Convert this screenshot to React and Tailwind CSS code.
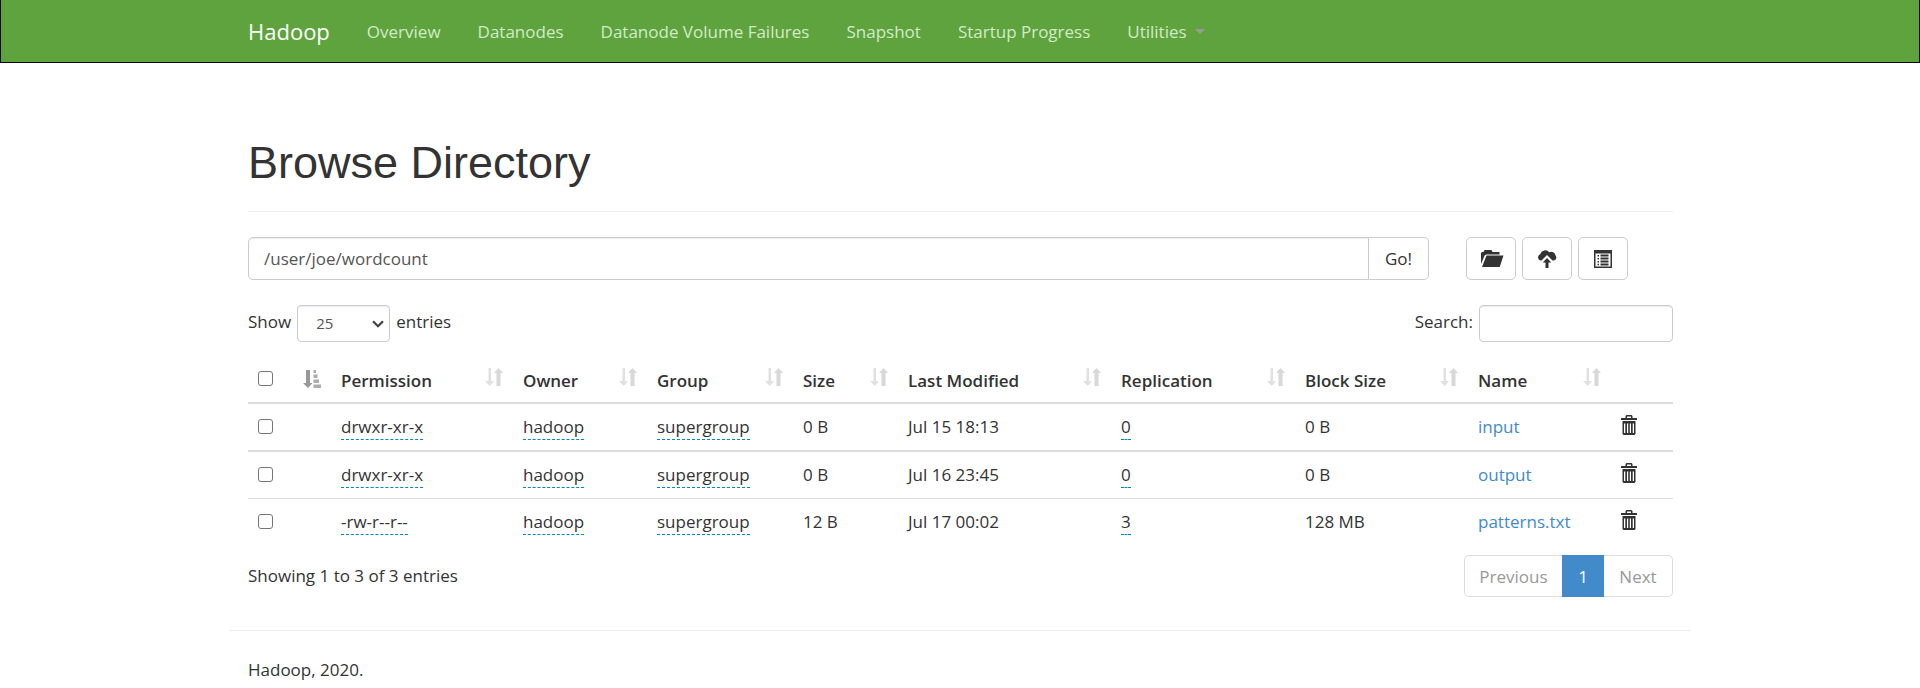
import { useState } from 'react'

const navLinks = ['Overview', 'Datanodes', 'Datanode Volume Failures', 'Snapshot', 'Startup Progress']

const columns = [
  { label: 'Permission', width: 'w-[182px]' },
  { label: 'Owner', width: 'w-[134px]' },
  { label: 'Group', width: 'w-[146px]' },
  { label: 'Size', width: 'w-[105px]' },
  { label: 'Last Modified', width: 'w-[213px]' },
  { label: 'Replication', width: 'w-[184px]' },
  { label: 'Block Size', width: 'w-[173px]' },
  { label: 'Name', width: 'w-[143px]' },
]

const files = [
  { permission: 'drwxr-xr-x', owner: 'hadoop', group: 'supergroup', size: '0 B', modified: 'Jul 15 18:13', replication: 0, blockSize: '0 B', name: 'input' },
  { permission: 'drwxr-xr-x', owner: 'hadoop', group: 'supergroup', size: '0 B', modified: 'Jul 16 23:45', replication: 0, blockSize: '0 B', name: 'output' },
  { permission: '-rw-r--r--', owner: 'hadoop', group: 'supergroup', size: '12 B', modified: 'Jul 17 00:02', replication: 3, blockSize: '128 MB', name: 'patterns.txt' },
]

function SortIcon() {
  return (
    <svg width="18" height="18" viewBox="0 0 18 18" fill="#d8d8d8" className="shrink-0">
      <path d="M3.5 0h2.5v13h3L4.75 18 0 13h3.5z" opacity="0.8" />
      <path d="M13.5 0 18 5h-2.5v13h-4V5H9z" />
    </svg>
  )
}

function SortAscIcon() {
  return (
    <svg width="18" height="18" viewBox="0 0 18 18" fill="#999" className="shrink-0">
      <path d="M3 0h4v13H9.500L5 18 0 13h3z" />
      <path d="M10.500 0h2.500v3h-2.500zM10.500 4.500h4v3.500h-4zM10.500 9.500h5.500v3.500h-5.500zM10.500 14.500h7.500v3.500h-7.500z" opacity="0.8" />
    </svg>
  )
}

function FolderIcon() {
  return (
    <svg width="23" height="18" viewBox="0 0 23 18" fill="#333" className="ml-[3px]">
      <path d="M0 14V3l1-1h1.500l1-2h7l1 2h7v2.500H5.200L3.600 5.500z" />
      <path d="M5.500 5.500H22.500L18.700 17H1z" />
    </svg>
  )
}

function UploadIcon() {
  return (
    <svg width="20" height="19" viewBox="0 0 20 19" fill="#333">
      <path d="M3.500 11.500A3.300 3.300 0 0 1 3.200 5.200 5.200 5.200 0 0 1 12.300 3.300 4.200 4.200 0 0 1 18.500 6.500 3 3 0 0 1 17 11.500H15.500L10 6 4.500 11.500z" />
      <path d="M10 9l4.300 4.500h-2.800V19h-3v-5.500H5.700z" />
    </svg>
  )
}

function ListIcon() {
  return (
    <svg width="18" height="18" viewBox="0 0 18 18" fill="#333">
      <path fillRule="evenodd" d="M0 0h18v18H0zM1.500 3.500v13h15V3.500z" />
      <path d="M3.500 5h1.500v1.500H3.500zM3.500 8h1.500v1.500H3.500zM3.500 11h1.500v1.500H3.500zM3.500 13.700h1.500v1.500H3.500zM6.500 4.500H14.500v2H6.500zM6.500 7.500H14.500v2H6.500zM6.500 10.500H14.500v2H6.500zM6.500 13.500H14.500v2H6.500z" />
    </svg>
  )
}

function TrashIcon() {
  return (
    <svg width="16" height="20" viewBox="0 0 16 20" fill="#333">
      <path fillRule="evenodd" d="M4.500 3V1l1-1h5l1 1v2H16v2H0V3zM6 3h4V1.500H6z" />
      <path fillRule="evenodd" d="M1.500 6h13V19l-1 1h-11l-1-1zM3 8.500V18h1.300V8.500zM6 8.500V18h1.200V8.500zM8.800 8.500V18H10V8.500zM11.700 8.500V18H13V8.500z" />
    </svg>
  )
}

function Editable({ children }) {
  return <span className="inline-block border-b border-dashed border-[#0088cc] leading-[24px]">{children}</span>
}

const check = 'block w-[15px] h-[15px] appearance-none rounded-[3px] border border-[#767676] bg-white checked:bg-[#428bca]'
const toolButton = 'flex h-[43px] w-[50px] items-center justify-center rounded-[5px] border border-[#ccc] bg-white'

export default function App() {
  const [path, setPath] = useState('/user/joe/wordcount')
  const [search, setSearch] = useState('')
  const [selected, setSelected] = useState([])

  function toggle(name) {
    setSelected(selected.includes(name) ? selected.filter(n => n !== name) : [...selected, name])
  }

  // header box picks every file, or clears them
  function toggleAll() {
    setSelected(selected.length === files.length ? [] : files.map(f => f.name))
  }

  const rows = files.filter(f => f.name.includes(search))

  return (
    <div className="font-['Open_Sans',sans-serif] text-[17px] leading-[25px] text-[#333]">
      <header className="border-x border-b border-[#080808] bg-[#5fa33e]">
        <nav className="mx-auto flex h-[62px] max-w-[1462px] items-center gap-[37px] px-[19px] text-[#d2ebc6]">
          <a href="#" className="text-[22px] text-white">Hadoop</a>
          {navLinks.map(link => (
            <a key={link} href="#">{link}</a>
          ))}
          <a href="#" className="flex items-center gap-2">
            Utilities
            <svg width="10" height="5" viewBox="0 0 10 5" fill="#999"><path d="M0 0h10L5 5z" /></svg>
          </a>
        </nav>
      </header>

      <main className="mx-auto max-w-[1462px] pt-[75px] pr-[18px] pl-[19px]">
        <h1 className="border-b border-[#eee] pb-[23px] font-['Liberation_Sans',Arial,sans-serif] text-[45px] leading-[50px] font-normal">
          Browse Directory
        </h1>

        <div className="mt-[25px] flex gap-[37px]">
          <form className="flex h-[43px] flex-1" onSubmit={e => e.preventDefault()}>
            <input
              aria-label="Directory"
              className="min-w-0 flex-1 rounded-l-[5px] border border-[#ccc] px-[15px] text-[#555] shadow-[inset_0_1px_1px_rgba(0,0,0,0.075)]"
              value={path}
              onChange={e => setPath(e.target.value)}
            />
            <button className="w-[60px] rounded-r-[5px] border border-l-0 border-[#ccc] bg-white">Go!</button>
          </form>
          <div className="flex w-[207px] gap-[6px]">
            <button aria-label="Create directory" className={toolButton}><FolderIcon /></button>
            <button aria-label="Upload files" className={toolButton}><UploadIcon /></button>
            <button aria-label="Cut and paste" className={toolButton}><ListIcon /></button>
          </div>
        </div>

        <div className="mt-[25px] flex justify-between leading-[33px]">
          <label className="flex gap-[6px]">
            Show
            <span className="relative">
              <select defaultValue="25" className="h-[37px] w-[93px] appearance-none rounded-[4px] border border-[#ccc] bg-white pl-[18px] text-[15px] text-[#555] shadow-[inset_0_1px_1px_rgba(0,0,0,0.075)]">
                <option>25</option>
                <option>50</option>
                <option>100</option>
              </select>
              <svg width="12" height="8" viewBox="0 0 12 8" fill="none" stroke="#444" strokeWidth="2.300" className="pointer-events-none absolute top-[15px] right-[6px]">
                <path d="M1 1.200l5 5 5-5" />
              </svg>
            </span>
            entries
          </label>
          <label className="flex gap-[6px]">
            Search:
            <input
              className="h-[37px] w-[194px] rounded-[4px] border border-[#ccc] px-3 text-[15px] shadow-[inset_0_1px_1px_rgba(0,0,0,0.075)]"
              value={search}
              onChange={e => setSearch(e.target.value)}
            />
          </label>
        </div>

        <table className="mt-[15px] w-full table-fixed border-separate border-spacing-0 text-left">
          <thead>
            <tr className="h-[45px]">
              <th className="w-[43px] pb-[2px] pl-[10px]">
                <input type="checkbox" aria-label="Select all" className={check} checked={selected.length === files.length} onChange={toggleAll} />
              </th>
              <th className="w-[40px] pr-[10px] pb-[2px]">
                <div className="flex justify-end"><SortAscIcon /></div>
              </th>
              {columns.map(col => (
                <th key={col.label} className={`${col.width} px-[10px] pt-[11px] pb-[9px] font-semibold`}>
                  <div className="flex justify-between whitespace-nowrap">{col.label}<SortIcon /></div>
                </th>
              ))}
              <th></th>
            </tr>
          </thead>
          <tbody className="[&>tr:nth-child(-n+2)>td]:border-t-2">
            {rows.map(f => (
              <tr key={f.name} className="leading-[26px] [&>td]:border-t [&>td]:border-[#ddd] [&>td]:p-[10px]">
                <td className="align-top">
                  <input type="checkbox" aria-label={f.name} className={`${check} mt-[5px]`} checked={selected.includes(f.name)} onChange={() => toggle(f.name)} />
                </td>
                <td></td>
                <td><Editable>{f.permission}</Editable></td>
                <td><Editable>{f.owner}</Editable></td>
                <td><Editable>{f.group}</Editable></td>
                <td>{f.size}</td>
                <td>{f.modified}</td>
                <td><Editable>{f.replication}</Editable></td>
                <td>{f.blockSize}</td>
                <td><a href="#" className="text-[#428bca]">{f.name}</a></td>
                <td className="align-top"><button aria-label={`Delete ${f.name}`} className="mt-[1px] block"><TrashIcon /></button></td>
              </tr>
            ))}
          </tbody>
        </table>

        <div className="mt-[10px] flex justify-between">
          <p className="pt-2">Showing 1 to 3 of 3 entries</p>
          <div className="flex h-[42px] text-[#999]">
            <button className="w-[98px] rounded-l-[5px] border border-r-0 border-[#ddd]">Previous</button>
            <button className="w-[42px] bg-[#428bca] text-white">1</button>
            <button className="w-[69px] rounded-r-[5px] border border-l-0 border-[#ddd]">Next</button>
          </div>
        </div>
      </main>

      <footer className="mx-auto mt-[33px] max-w-[1462px] border-t border-[#eee] px-[19px] pt-[26px]">
        <p>Hadoop, 2020.</p>
      </footer>
    </div>
  )
}
